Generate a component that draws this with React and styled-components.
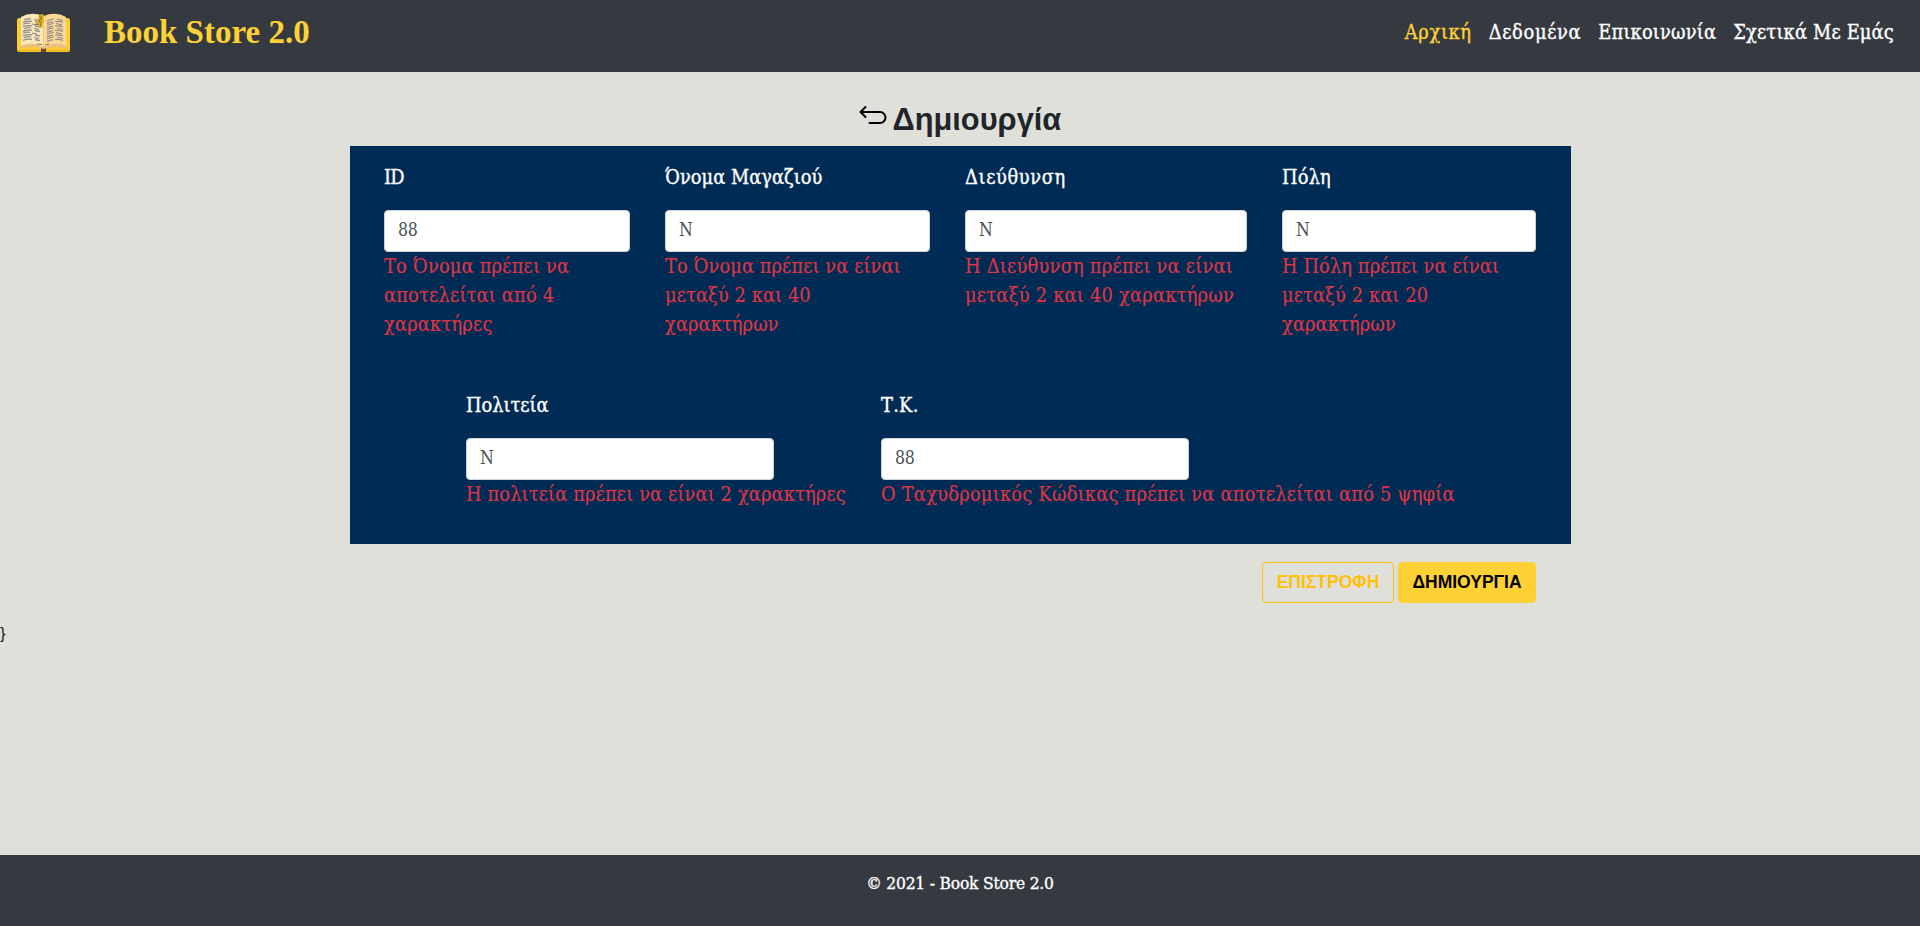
import React from 'react';
import styled, { createGlobalStyle } from 'styled-components';

const slab = '"Roboto Slab", "DejaVu Serif", serif';
const sans = '"Liberation Sans", Arial, sans-serif';

const GlobalStyle = createGlobalStyle`
  *, *::before, *::after { box-sizing: border-box; }
  body {
    margin: 0;
    background: #dfe0da;
    color: #212529;
    font-family: ${slab};
    font-stretch: condensed;
    font-size: 16px;
    line-height: 1.5;
  }
`;

const Page = styled.div`
  min-height: 100vh;
  display: flex;
  flex-direction: column;
`;

const Navbar = styled.header`
  height: 72px;
  padding: 0 26px 0 17px;
  display: flex;
  align-items: flex-start;
  justify-content: space-between;
  background: #353a40;
`;

const Brand = styled.a`
  display: flex;
  align-items: flex-start;
  gap: 34px;
  color: #ffd135;
  font: bold 33px/48px "Liberation Serif", "Times New Roman", serif;
  padding-top: 8px;
`;

const BrandName = styled.span`
  white-space: nowrap;
`;

const BookIcon = styled.svg`
  width: 53px;
  height: 39px;
  margin-top: 5px;
`;

const Nav = styled.nav`
  display: flex;
  padding-top: 18px;
  gap: 17px;
`;

const NavLink = styled.a`
  color: ${p => (p.$active ? '#ffd135' : '#fff')};
  font-size: 19.8px;
  line-height: 29px;
  letter-spacing: ${p => p.$spacing}px;
  white-space: nowrap;
  -webkit-text-stroke: 0.35px currentColor;
`;

const Main = styled.main`
  flex: 1;
`;

const Content = styled.section`
  width: 1221px;
  margin: 0 0 0 350px;
`;

const TitleRow = styled.div`
  height: 74px;
  padding: 28px 0 0 506.5px;
  display: flex;
  gap: 6px;
`;

const BackIcon = styled.svg`
  width: 30px;
  height: 24px;
  margin-top: 4px;
`;

const Title = styled.h1`
  margin: 0;
  font: bold 30.8px/40px ${sans};
`;

const Panel = styled.form`
  height: 398px;
  padding: 17px 35px 0 34px;
  background: #002b54;
`;

const FieldRow = styled.div`
  display: grid;
  grid-template-columns: ${p => p.$columns};
  height: 228px;
  padding-left: ${p => p.$indent || 0}px;
`;

const Field = styled.div`
  display: flex;
  flex-direction: column;
  align-items: flex-start;
`;

const Label = styled.label`
  height: 47px;
  color: #fff;
  font-size: 19.8px;
  line-height: 29px;
  letter-spacing: ${p => p.$spacing}px;
  -webkit-text-stroke: 0.35px currentColor;
`;

const Input = styled.input`
  width: ${p => p.$width}px;
  height: 42px;
  padding: 5px 13px 7px;
  border: 1px solid #ced4da;
  border-radius: 4px;
  background: #fff;
  color: #495057;
  font-family: ${slab};
  font-stretch: condensed;
  font-size: 17.6px;
  letter-spacing: -0.4px;
  outline: none;
`;

const ErrorText = styled.span`
  color: #dc3545;
  font-size: 19.8px;
  line-height: 29px;
  letter-spacing: ${p => p.$spacing}px;
  white-space: pre-line;
  -webkit-text-stroke: 0.2px currentColor;
`;

const Actions = styled.div`
  display: flex;
  justify-content: flex-end;
  gap: 4px;
  padding: 18px 35px 0 0;
`;

const Button = styled.button`
  width: ${p => p.$width}px;
  height: 41px;
  padding: 0 0 2px;
  border: 1px solid ${p => (p.$primary ? '#ffd135' : '#ffc107')};
  border-radius: 4px;
  background: ${p => (p.$primary ? '#ffd135' : 'transparent')};
  color: ${p => (p.$primary ? '#000' : '#ffc107')};
  font: bold 17.5px/26px ${sans};
`;

const Stray = styled.div`
  margin-top: 19px;
  font: 16.8px/24px ${sans};
`;

const Footer = styled.footer`
  height: 71px;
  padding-top: 14px;
  background: #353a40;
  color: #fff;
  text-align: center;
  font-size: 17.3px;
  letter-spacing: -0.2px;
  line-height: 28px;
  -webkit-text-stroke: 0.35px currentColor;
`;

const topFields = [
  { label: 'ID', spacing: -0.8, value: '88', width: 246, errorSpacing: 0.2, error: 'Το Όνομα πρέπει να\nαποτελείται από 4\nχαρακτήρες' },
  { label: 'Όνομα Μαγαζιού', spacing: 0.05, value: 'N', width: 265, errorSpacing: 0.1, error: 'Το Όνομα πρέπει να είναι\nμεταξύ 2 και 40\nχαρακτήρων' },
  { label: 'Διεύθυνση', spacing: 0.65, value: 'N', width: 282, errorSpacing: 0.25, error: 'Η Διεύθυνση πρέπει να είναι\nμεταξύ 2 και 40 χαρακτήρων' },
  { label: 'Πόλη', spacing: 0.2, value: 'N', width: 254, errorSpacing: 0.12, error: 'Η Πόλη πρέπει να είναι\nμεταξύ 2 και 20\nχαρακτήρων' },
];

const bottomFields = [
  { label: 'Πολιτεία', spacing: 0, value: 'N', width: 308, errorSpacing: 0.15, error: 'Η πολιτεία πρέπει να είναι 2 χαρακτήρες' },
  { label: 'Τ.Κ.', spacing: 0.3, value: '88', width: 308, errorSpacing: 0.25, error: 'Ο Ταχυδρομικός Κώδικας πρέπει να αποτελείται από 5 ψηφία' },
];

const links = [
  { text: 'Αρχική', spacing: 0.65, active: true },
  { text: 'Δεδομένα', spacing: 0.7 },
  { text: 'Επικοινωνία', spacing: 0.2 },
  { text: 'Σχετικά Με Εμάς', spacing: 0.2 },
];

function FormField({ label, spacing, value, width, error, errorSpacing }) {
  return (
    <Field>
      <Label $spacing={spacing}>{label}</Label>
      <Input $width={width} defaultValue={value} />
      <ErrorText $spacing={errorSpacing}>{error}</ErrorText>
    </Field>
  );
}

function Book() {
  const lines = [10, 14.5, 19, 23.5, 28];
  return (
    <BookIcon viewBox="0 0 53 39">
      <rect x="0" y="5" width="53" height="34" rx="2.5" fill="#fdcb32" />
      <path d="M1 37h24v-2h3v2h24v1.2H1z" fill="#e8b020" />
      <rect x="24" y="35" width="5" height="4" fill="#5e4c1f" />
      <path d="M4 4Q14-2 26.500 3V35Q14 30 4 35z" fill="#fbe6b5" />
      <path d="M49 4Q39-2 26.500 3V35Q39 30 49 35z" fill="#fdd894" />
      <path d="M4 33Q14 28 26.500 34Q39 28 49 33V35.500Q38 32 26.500 36Q15 32 4 35.500z" fill="#e9bd86" />
      <path d="M26.500 4v30" stroke="#eec886" strokeWidth="1" />
      {lines.map((y, i) => (
        <g key={y} fill="none" stroke="#8f8c93" strokeWidth="1.2">
          <path d={`M${i % 2 ? 6 : 7} ${y - 3}q4-2 7-1M${i % 2 ? 15 : 17} ${y - 3.5}l5 1.200M6 ${y - 0.6}q5-2 9-1M18 ${y - 1.3}l5 1`} />
          <path d={`M30 ${y - 2}q4-2 7-2M${i % 2 ? 39 : 40} ${y - 4}l6 1.500M30 ${y + 0.4}q4-2 6-1.500M38 ${y - 1.5}q5-.5 8 1`} />
        </g>
      ))}
      <path d="M22 2l3-1 2 1-1 3 1 3-2 2 1 4-3 1-1-3-3-1 2-3-1-2 2-1z" fill="#d9ac15" />
      <path d="M22 3l3 2-3 3 3 2-2 3M19 11l3 1M20 31l5 .5M28 32l4-1" fill="none" stroke="#756019" strokeWidth=".8" />
    </BookIcon>
  );
}

export default function App() {
  return (
    <Page>
      <GlobalStyle />
      <Navbar>
        <Brand>
          <Book />
          <BrandName>Book Store 2.0</BrandName>
        </Brand>
        <Nav>
          {links.map(l => (
            <NavLink key={l.text} $active={l.active} $spacing={l.spacing}>{l.text}</NavLink>
          ))}
        </Nav>
      </Navbar>
      <Main>
        <Content>
          <TitleRow>
            <BackIcon viewBox="0 0 30 24" fill="none" stroke="#000" strokeWidth="2" strokeLinecap="round" strokeLinejoin="round">
              <path d="M8.500 3L3.500 8l5 5M3.500 8H23a5.500 5.500 0 0 1 0 11H12.500" />
            </BackIcon>
            <Title>Δημιουργία</Title>
          </TitleRow>
          <Panel>
            <FieldRow $columns="281px 300px 317px 1fr">
              {topFields.map(f => <FormField key={f.label} {...f} />)}
            </FieldRow>
            <FieldRow $columns="415px 1fr" $indent={82}>
              {bottomFields.map(f => <FormField key={f.label} {...f} />)}
            </FieldRow>
          </Panel>
          <Actions>
            <Button type="button" $width={132}>ΕΠΙΣΤΡΟΦΗ</Button>
            <Button type="button" $width={138} $primary>ΔΗΜΙΟΥΡΓΙΑ</Button>
          </Actions>
        </Content>
        <Stray>{'}'}</Stray>
      </Main>
      <Footer>© 2021 - Book Store 2.0</Footer>
    </Page>
  );
}
